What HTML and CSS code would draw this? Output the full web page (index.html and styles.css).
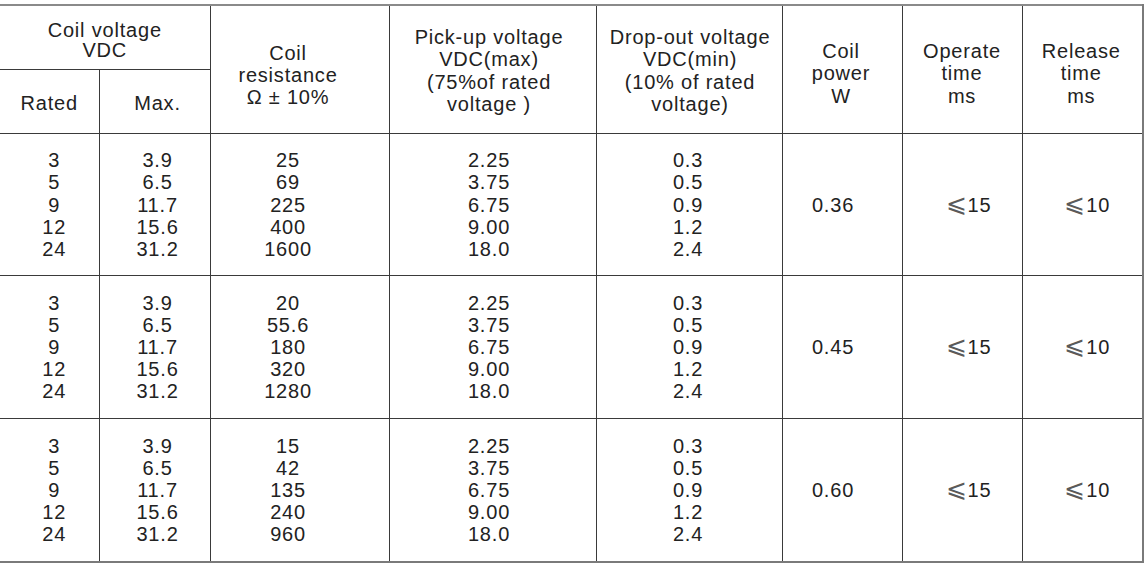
FILE: index.html
```html
<!DOCTYPE html>
<html lang="en">
<head>
<meta charset="utf-8">
<title>Coil Parameters</title>
<link rel="stylesheet" href="styles.css">
</head>
<body>
<div class="caption">Coil Parameters</div>
<table class="coil">
  <colgroup>
    <col class="w-rated"><col class="w-max"><col class="w-res"><col class="w-pick"><col class="w-drop"><col class="w-pow"><col class="w-op"><col class="w-rel">
  </colgroup>
  <thead>
    <tr class="hrow">
      <th colspan="2" class="h-volt">Coil voltage<br>VDC</th>
      <th rowspan="2" class="h-res">Coil<br>resistance<br>Ω ± 10%</th>
      <th rowspan="2" class="h-pick">Pick-up voltage<br>VDC(max)<br>(75%of rated<br>voltage )</th>
      <th rowspan="2" class="h-drop">Drop-out voltage<br>VDC(min)<br>(10% of rated<br>voltage)</th>
      <th rowspan="2" class="h-3 h-pow">Coil<br>power<br>W</th>
      <th rowspan="2" class="h-3">Operate<br>time<br>ms</th>
      <th rowspan="2" class="h-3 h-rel">Release<br>time<br>ms</th>
    </tr>
    <tr class="hrow">
      <th class="h-rated">Rated</th>
      <th class="h-max">Max.</th>
    </tr>
  </thead>
  <tbody>
    <tr class="drow">
      <td class="d-rated">3<br>5<br>9<br>12<br>24</td>
      <td class="d-max">3.9<br>6.5<br>11.7<br>15.6<br>31.2</td>
      <td class="d-res">25<br>69<br>225<br>400<br>1600</td>
      <td class="d-pick">2.25<br>3.75<br>6.75<br>9.00<br>18.0</td>
      <td class="d-drop">0.3<br>0.5<br>0.9<br>1.2<br>2.4</td>
      <td class="d-pow">0.36</td>
      <td class="d-op"><span class="le">⩽</span>15</td>
      <td class="d-rel"><span class="le">⩽</span>10</td>
    </tr>
    <tr class="drow">
      <td class="d-rated">3<br>5<br>9<br>12<br>24</td>
      <td class="d-max">3.9<br>6.5<br>11.7<br>15.6<br>31.2</td>
      <td class="d-res">20<br>55.6<br>180<br>320<br>1280</td>
      <td class="d-pick">2.25<br>3.75<br>6.75<br>9.00<br>18.0</td>
      <td class="d-drop">0.3<br>0.5<br>0.9<br>1.2<br>2.4</td>
      <td class="d-pow">0.45</td>
      <td class="d-op"><span class="le">⩽</span>15</td>
      <td class="d-rel"><span class="le">⩽</span>10</td>
    </tr>
    <tr class="drow last">
      <td class="d-rated">3<br>5<br>9<br>12<br>24</td>
      <td class="d-max">3.9<br>6.5<br>11.7<br>15.6<br>31.2</td>
      <td class="d-res">15<br>42<br>135<br>240<br>960</td>
      <td class="d-pick">2.25<br>3.75<br>6.75<br>9.00<br>18.0</td>
      <td class="d-drop">0.3<br>0.5<br>0.9<br>1.2<br>2.4</td>
      <td class="d-pow">0.60</td>
      <td class="d-op"><span class="le">⩽</span>15</td>
      <td class="d-rel"><span class="le">⩽</span>10</td>
    </tr>
  </tbody>
</table>
</body>
</html>
```
FILE: styles.css
```css
html, body {
  margin: 0;
  padding: 0;
  background: #ffffff;
}
body {
  font-family: "Liberation Sans", Arial, sans-serif;
  color: #222222;
  width: 1145px;
  height: 566px;
  overflow: hidden;
}
.caption {
  font-size: 21px;
  font-weight: bold;
  letter-spacing: 1px;
  line-height: 20px;
  height: 20px;
  margin-top: -17px;
  margin-bottom: 1px;
  padding-left: 20px;
  color: #444;
}
.coil {
  border-collapse: collapse;
  table-layout: fixed;
  width: 1143px;
  border-top: 2px solid #8a8a8a;
  border-right: 2px solid #7a7a7a;
  border-bottom: 2px solid #7a7a7a;
  border-left: hidden;
  font-size: 20px;
  letter-spacing: 0.8px;
}
.w-rated { width: 99px; }
.w-max { width: 111px; }
.w-res { width: 179px; }
.w-pick { width: 207px; }
.w-drop { width: 186px; }
.w-pow { width: 120px; }
.w-op { width: 120px; }
.w-rel { width: 121px; }

.coil th, .coil td {
  border: 1px solid #3a3a3a;
  padding: 0;
  text-align: center;
  vertical-align: middle;
  font-weight: normal;
}
.coil th { line-height: 22.3px; }
.coil td { line-height: 22.2px; }
.hrow { height: 64.3px; }
.drow { height: 142.4px; }
.drow.last { height: 144px; }

.h-volt { line-height: 20.7px !important; padding-top: 6px !important; }
.h-rated { padding-top: 3px !important; }
.h-max { padding-top: 3px !important; padding-left: 6px !important; }
.h-res { padding-top: 11px !important; padding-right: 23px !important; }
.h-pick { padding-top: 2px !important; padding-right: 7px !important; }
.h-drop { padding-top: 2px !important; padding-left: 2px !important; }
.h-3 { padding-top: 8px !important; }
.h-pow { padding-right: 2px !important; }
.h-rel { padding-right: 2px !important; }

.d-rated { padding-left: 10px !important; }
.d-max { padding-left: 6px !important; }
.d-res { padding-right: 23px !important; }
.d-pick { padding-right: 7px !important; }
.d-drop { padding-right: 2px !important; }
.d-pow { padding-right: 18px !important; }
.d-op { padding-left: 13px !important; }
.d-rel { padding-left: 10px !important; }

.le {
  font-family: "DejaVu Sans", sans-serif;
  font-weight: 200;
  color: #5a5a5a;
  letter-spacing: 0;
  font-size: 25px;
  line-height: 20px;
  margin-right: 1px;
}
```
